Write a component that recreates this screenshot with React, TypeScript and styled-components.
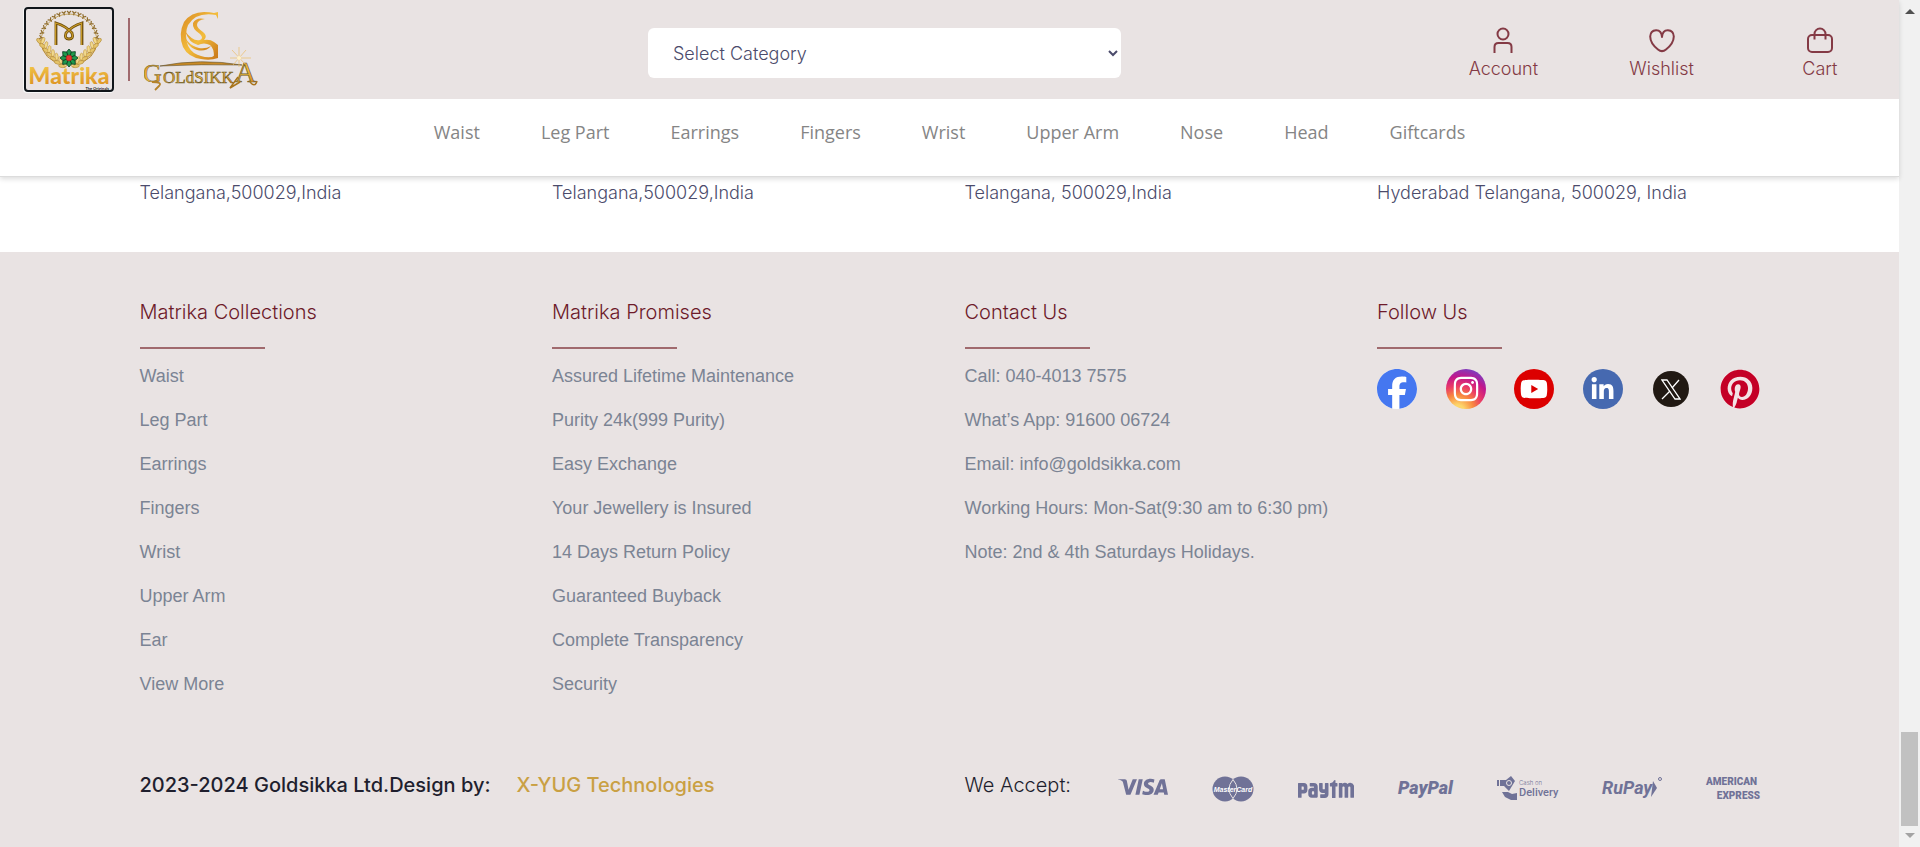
import React from "react";
import styled, { createGlobalStyle } from "styled-components";
import { FaFacebook, FaInstagram, FaLinkedinIn, FaPinterest, FaYoutube } from "react-icons/fa6";
import { SiPaytm, SiVisa } from "react-icons/si";

const inter = `Inter, "Liberation Sans", sans-serif`;
const arial = `"Liberation Sans", Arial, sans-serif`;

const GlobalStyle = createGlobalStyle`
  * { box-sizing: border-box; }
  body { margin: 0; background: #fff; font-family: ${inter}; color: #4b4b6b; }
  a { color: inherit; text-decoration: none; }
  h2, p, ul { margin: 0; padding: 0; }
  ul { list-style: none; }
`;

const Window = styled.div`
  display: flex;
  min-height: 100vh;
`;

const Page = styled.div`
  flex: 1;
  min-width: 0;
  display: flex;
  flex-direction: column;
`;

const Header = styled.header`
  position: sticky;
  top: 0;
  z-index: 2;
  background: #fff;
  border-bottom: 1px solid #dcdcdc;
  box-shadow: 0 2px 5px rgba(0, 0, 0, 0.14);
`;

const TopBar = styled.div`
  display: grid;
  grid-template-columns: 4fr 3fr 2fr 3fr;
  align-items: center;
  height: 99px;
  background: #e9e3e3;
`;

const Logos = styled.div`
  display: flex;
  align-items: center;
  gap: 14px;
  padding-left: 23px;

  a { display: block; height: 86px; }
  svg { display: block; }
`;

const LogoDivider = styled.span`
  width: 2px;
  height: 63px;
  background: #a06a6e;
`;

const CategorySelect = styled.select`
  justify-self: center;
  width: calc(100% - 2px);
  height: 50px;
  margin: 7px 0 0 28px;
  padding: 0 0 0 21px;
  border: 0;
  border-radius: 6px;
  background: #fff;
  color: #4b4b6b;
  font: 300 18px ${inter};
`;

const Actions = styled.nav`
  grid-column: 4;
  display: grid;
  grid-template-columns: repeat(3, 1fr);
`;

const Action = styled.a`
  display: flex;
  flex-direction: column;
  align-items: center;
  gap: 5px;
  padding-top: 7px;
  color: #843a45;
  font-size: 18px;
  font-weight: 300;
  line-height: 22px;
`;

const CategoryNav = styled.nav`
  display: flex;
  justify-content: center;
  gap: 61px;
  height: 77px;
  padding-top: 21px;
  color: #858585;
  font: 400 18px/24px "Open Sans", "Noto Sans", sans-serif;
`;

const Columns = styled.div`
  display: grid;
  grid-template-columns: repeat(4, 1fr);
  width: 100%;
  max-width: 1650px;
  margin: 0 auto;
`;

const Column = styled.section`
  padding: 0 15px;
`;

const Addresses = styled.section`
  padding: 4px 0 47px;
  font-size: 18px;
  font-weight: 300;
  line-height: 24px;
`;

const Footer = styled.footer`
  flex: 1;
  padding: 46px 0 48px;
  background: #e9e3e3;
`;

const Heading = styled.h2`
  color: #6d1a2a;
  font-size: 20px;
  font-weight: 300;
  line-height: 28px;

  &::after {
    content: "";
    display: block;
    width: 125px;
    height: 2px;
    margin-top: 21px;
    background: #a06a6e;
  }
`;

const LinkList = styled.ul`
  display: grid;
  gap: 20px;
  padding-top: 15px;
  color: #7b8494;
  font: 400 18px/24px ${arial};
`;

const Socials = styled.div`
  display: flex;
  justify-content: space-between;
  align-items: center;
  padding-top: 20px;
`;

const Social = styled.a<{ $bg: string; $fg?: string; $inset?: number }>`
  display: grid;
  place-items: center;
  width: ${(p) => 40 - 2 * (p.$inset ?? 0)}px;
  height: ${(p) => 40 - 2 * (p.$inset ?? 0)}px;
  margin: ${(p) => p.$inset ?? 0}px;
  border-radius: 50%;
  background: ${(p) => p.$bg};
  color: ${(p) => p.$fg ?? "#fff"};
`;

const Bottom = styled.div`
  display: grid;
  grid-template-columns: 1fr 1fr;
  width: 100%;
  max-width: 1650px;
  margin: 0 auto;
  padding-top: 75px;
  font-size: 20px;
  line-height: 28px;
  color: #1f1f2e;
`;

const Credit = styled.p`
  display: flex;
  gap: 26px;
  padding: 0 15px;
  font-weight: 500;

  a { color: #c9a043; }
`;

const Accept = styled.div`
  display: flex;
  justify-content: space-between;
  padding: 0 15px;
  font-weight: 300;
`;

const Payments = styled.div`
  display: flex;
  gap: 44px;
  padding-top: 4px;

  svg { display: block; height: 28px; fill: #707297; overflow: visible; }
`;

const ScrollTrack = styled.aside`
  position: sticky;
  top: 0;
  display: flex;
  flex-direction: column;
  justify-content: space-between;
  align-items: center;
  width: 21px;
  height: 100vh;
  padding: 9px 0;
  background: #f1f1f1;
`;

const ScrollThumb = styled.div`
  width: 17px;
  height: 94px;
  margin: auto 0 7px;
  background: #c1c1c1;
`;

const categories = ["Waist", "Leg Part", "Earrings", "Fingers", "Wrist", "Upper Arm", "Nose", "Head", "Giftcards"];

const addresses = [
  "Telangana,500029,India",
  "Telangana,500029,India",
  "Telangana, 500029,India",
  "Hyderabad Telangana, 500029, India",
];

const footerLists = [
  { title: "Matrika Collections", items: ["Waist", "Leg Part", "Earrings", "Fingers", "Wrist", "Upper Arm", "Ear", "View More"] },
  {
    title: "Matrika Promises",
    items: [
      "Assured Lifetime Maintenance",
      "Purity 24k(999 Purity)",
      "Easy Exchange",
      "Your Jewellery is Insured",
      "14 Days Return Policy",
      "Guaranteed Buyback",
      "Complete Transparency",
      "Security",
    ],
  },
  {
    title: "Contact Us",
    items: [
      "Call: 040-4013 7575",
      "What’s App: 91600 06724",
      "Email: info@goldsikka.com",
      "Working Hours: Mon-Sat(9:30 am to 6:30 pm)",
      "Note: 2nd & 4th Saturdays Holidays.",
    ],
  },
];

function MatrikaLogo() {
  const leaves = [0, 1, 2, 3, 4, 5, 6];
  const beads = Array.from({ length: 17 }, (_, i) => Math.PI * (1.04 + (i * 0.92) / 16));
  return (
    <svg width="91" height="86" viewBox="0 0 91 86" role="img" aria-label="Matrika The Originals">
      <defs>
        <linearGradient id="gold" x1="0" y1="0" x2="0" y2="1">
          <stop offset="0" stopColor="#f6cf52" />
          <stop offset="1" stopColor="#d98a1c" />
        </linearGradient>
      </defs>
      <rect x="0" y="0" width="91" height="86" rx="4" fill="#f7f7f7" />
      <rect x="2" y="1" width="88" height="83" rx="3" fill="#e9e3e3" stroke="#10151a" strokeWidth="2" />
      <path d="M18 35 A28 28 0 1 1 74 35" fill="none" stroke="#c3a45c" strokeWidth="1" />
      {beads.map((a, i) => (
        <g key={i} transform={`translate(${46 + 28 * Math.cos(a)} ${34 + 28 * Math.sin(a)}) rotate(${(a * 180) / Math.PI + 90})`}>
          <path d="M-2 -2 L0 0 L2 -2 M0 0 V2" stroke="#8f6c2c" strokeWidth="1.2" fill="none" />
        </g>
      ))}
      {[1, -1].map((side) => (
        <g key={side} transform={side === 1 ? undefined : "translate(92 0) scale(-1 1)"}>
          <path d="M18 34 Q19 53 41 58" fill="none" stroke="#b98a2d" strokeWidth="1" />
          {leaves.map((i) => (
            <g key={i} transform={`translate(${18 + i * 3 + i * i * 0.1} ${33 + i * 4.7 - i * i * 0.12}) rotate(${-12 - i * 7})`}>
              <ellipse cx="-2" cy="0" rx="1.8" ry="3.8" transform="rotate(-32)" fill="#e5c46b" stroke="#a57a25" strokeWidth=".5" />
              <ellipse cx="2" cy="0" rx="1.600" ry="3.600" transform="rotate(34)" fill="#f1d98d" stroke="#b98a2d" strokeWidth=".5" />
            </g>
          ))}
        </g>
      ))}
      <path
        d="M33 38 V16 Q43 19 49 26 Q51 32 46 32 Q41 32 43 26 Q49 19 59 16 V38"
        fill="none" stroke="#6e4e0c" strokeWidth="2.800"
      />
      <path
        d="M32.500 38 V16 Q43 19 49 26 Q51 32 46 32 Q41 32 43 26 Q49 19 58.500 16 V38"
        fill="none" stroke="#c89a28" strokeWidth="1.200"
      />
      {[0, 45, 90, 135, 180, 225, 270, 315].map((r) => (
        <path key={r} d="M46 51 L43.500 45 L46 42 L48.500 45 Z" transform={`rotate(${r} 46 51)`} fill="#1f9a4c" stroke="#0d3d22" strokeWidth=".8" />
      ))}
      <circle cx="46" cy="51" r="3" fill="#e8352e" stroke="#8c1c1c" strokeWidth=".6" />
      <text x="46" y="77" textAnchor="middle" fontFamily="Lato, sans-serif" fontSize="23" fontWeight="900" fill="url(#gold)">Matrika</text>
      <text x="86" y="83" textAnchor="end" fontFamily="Lato, sans-serif" fontSize="4" fontWeight="700" fill="#222">The Originals</text>
    </svg>
  );
}

function GoldsikkaLogo() {
  const font = { fontFamily: '"Liberation Serif", serif', fill: "url(#coin)", stroke: "#6a5a2a", strokeWidth: 0.5 };
  return (
    <svg width="116" height="86" viewBox="0 0 116 86" role="img" aria-label="Goldsikka">
      <defs>
        <linearGradient id="coin" x1="0" y1="0" x2="1" y2="1">
          <stop offset="0" stopColor="#d98a22" />
          <stop offset=".5" stopColor="#f3bd3c" />
          <stop offset="1" stopColor="#c97718" />
        </linearGradient>
      </defs>
      <g fill="url(#coin)">
        <path d="M74 5 V12 L72 8 Q60 6 52 10 Q42 16 42 28 Q42 40 50 46 Q58 51 68 50 L74 46 V51 Q66 54 57 52 Q44 50 39 40 Q34 27 40 15 Q47 5 60 5 Q66 5 70 6 Z" />
        <path d="M61 12 Q53 13 53 18 Q53 21 59 25 Q64 29 60 33 Q66 32 70 35 L74 38 V47 L70 50 Q70 41 66 38 Q60 35 54 38 Q45 36 41 24 Q49 35 56 33 Q60 31 56 27 Q48 22 49 16 Q52 10 61 12 Z" />
        <path d="M39 24 Q42 38 55 41 Q62 42 67 39 Q62 45 53 43 Q42 40 39 24 Z" />
      </g>
      <path d="M16 59 Q56 51 98 58 Q58 57 16 59 Z" fill="#c98a25" stroke="#5d4d2a" strokeWidth=".6" />
      <text x="-1" y="75" fontSize="26" {...font}>G</text>
      <path d="M8 75 Q19 75 15 79 L11 83" fill="none" stroke="#b5832a" strokeWidth="1.800" />
      <text x="19" y="76" fontSize="17" {...font} strokeWidth=".6">OLdSIKK</text>
      <text x="91" y="75" fontSize="29" {...font} strokeWidth=".7">A</text>
      <path d="M94 70 L86 81 L96 75 M106 75 Q111 81 113 74" fill="none" stroke="#a8741c" strokeWidth="1.500" />
      <g stroke="#edbd69" strokeWidth=".7">
        <path d="M95 40 V60 M86 51 H107 M88 43 L101 57 M102 43 L89 58" />
      </g>
      <circle cx="95" cy="51" r="2" fill="#fff2cc" />
    </svg>
  );
}

const line = { width: 26, height: 26, viewBox: "0 0 26 26", fill: "none", stroke: "currentColor", strokeWidth: 2, "aria-hidden": true };

const UserIcon = () => (
  <svg {...line}>
    <circle cx="13" cy="7" r="5.500" />
    <path d="M4.500 26 V20 Q4.500 16 8.500 16 H17.500 Q21.500 16 21.500 20 V26" />
  </svg>
);

const HeartIcon = () => (
  <svg {...line}>
    <path d="M13 10 Q12.500 3 7 3.200 Q1.500 3.500 1.200 9.500 Q1.300 16.500 9 22.500 Q13 25.800 17 22.500 Q24.700 16.500 24.800 9.500 Q24.500 3.500 19 3.200 Q13.500 3 13 10 Z" strokeLinejoin="round" />
  </svg>
);

const BagIcon = () => (
  <svg {...line}>
    <rect x="1" y="8" width="24" height="17" rx="4" />
    <path d="M7.500 12.500 V7 A5.500 5.500 0 0 1 18.500 7 V12.500" />
  </svg>
);

const XIcon = () => (
  <svg width="20" height="21" viewBox="0 0 20 21" fill="none" stroke="#fff" strokeWidth="1.300" aria-hidden>
    <path d="M1 1 H6 L19 20 H14 Z" />
    <path d="M18 1 L11 9 M9 12 L1 20" />
  </svg>
);

const MasterCard = () => (
  <svg width="42" viewBox="0 0 42 28" role="img" aria-label="MasterCard">
    <circle cx="13" cy="14" r="12.500" />
    <circle cx="29" cy="14" r="12.500" />
    <path d="M21 4.500 Q13 14 21 23.500 Q29 14 21 4.500 Z" fill="none" stroke="#e9e3e3" />
    <text x="21" y="16.500" textAnchor="middle" fontFamily="Liberation Sans, sans-serif" fontStyle="italic" fontWeight="700" fontSize="7" style={{ fill: "#fff" }}>MasterCard</text>
  </svg>
);

const PayPal = () => (
  <svg width="55" viewBox="0 0 55 28" role="img" aria-label="PayPal">
    <text x="0" y="19" fontFamily="Roboto, sans-serif" fontSize="18" fontWeight="900" fontStyle="italic">PayPal</text>
  </svg>
);

const CashOnDelivery = () => (
  <svg width="61" viewBox="0 0 61 28" role="img" aria-label="Cash on Delivery">
    <path d="M0 5 H2 V11 H0 Z M3 5 H9 L14 1 L18 6 L12 16 L7 11 H3 Z M5 17 H11 L15 19 L20 18 L20 25 H14 L8 22 Z" />
    <circle cx="12" cy="8" r="2.500" fill="none" stroke="#e9e3e3" />
    <text x="22" y="10" fontFamily="Inter, sans-serif" fontSize="6">Cash on</text>
    <text x="22" y="21" fontFamily="Roboto, sans-serif" fontSize="11" fontWeight="500">Delivery</text>
  </svg>
);

const RuPay = () => (
  <svg width="60" viewBox="0 0 60 28" role="img" aria-label="RuPay">
    <text x="0" y="19" fontFamily="Roboto, sans-serif" fontSize="18" fontWeight="700" fontStyle="italic">RuPay</text>
    <path d="M51 6 L55 13 L49 22 Z" />
    <circle cx="58" cy="4" r="1.500" style={{ fill: "none" }} stroke="#707297" />
  </svg>
);

const Amex = () => (
  <svg width="54" viewBox="0 0 54 28" role="img" aria-label="American Express">
    <g fontFamily="Roboto, sans-serif" fontSize="10" fontWeight="900">
      <text x="0" y="10">AMERICAN</text>
      <text x="54" y="24" textAnchor="end">EXPRESS</text>
    </g>
  </svg>
);

export default function App() {
  return (
    <Window>
      <GlobalStyle />
      <Page>
        <Header>
          <TopBar>
            <Logos>
              <a href="#matrika"><MatrikaLogo /></a>
              <LogoDivider />
              <a href="#goldsikka"><GoldsikkaLogo /></a>
            </Logos>
            <CategorySelect aria-label="Category" defaultValue="">
              <option value="">Select Category</option>
              {categories.map((c) => <option key={c}>{c}</option>)}
            </CategorySelect>
            <Actions>
              <Action href="#account"><UserIcon />Account</Action>
              <Action href="#wishlist"><HeartIcon />Wishlist</Action>
              <Action href="#cart"><BagIcon />Cart</Action>
            </Actions>
          </TopBar>
          <CategoryNav>
            {categories.map((c) => <a key={c} href="#category">{c}</a>)}
          </CategoryNav>
        </Header>

        <Addresses>
          <Columns>
            {addresses.map((a, i) => <Column key={i}>{a}</Column>)}
          </Columns>
        </Addresses>

        <Footer>
          <Columns>
            {footerLists.map(({ title, items }) => (
              <Column key={title}>
                <Heading>{title}</Heading>
                <LinkList>
                  {items.map((item) => <li key={item}><a href="#info">{item}</a></li>)}
                </LinkList>
              </Column>
            ))}
            <Column>
              <Heading>Follow Us</Heading>
              <Socials>
                <Social href="#facebook" aria-label="Facebook" $bg="#fff" $fg="#4577f0"><FaFacebook size={40} /></Social>
                <Social href="#instagram" aria-label="Instagram" $bg="radial-gradient(circle at 30% 105%, #fdd66b 0 12%, #f8873f 32%, #ea3a66 50%, #c2168c 68%, #5b50d8 95%)"><FaInstagram size={28} /></Social>
                <Social href="#youtube" aria-label="YouTube" $bg="#dc0000"><FaYoutube size={28} /></Social>
                <Social href="#linkedin" aria-label="LinkedIn" $bg="#4669b0"><FaLinkedinIn size={25} /></Social>
                <Social href="#x" aria-label="X" $bg="#211913" $inset={2}><XIcon /></Social>
                <Social href="#pinterest" aria-label="Pinterest" $bg="#f3e3e5" $fg="#c40026"><FaPinterest size={40} /></Social>
              </Socials>
            </Column>
          </Columns>

          <Bottom>
            <Credit>
              <span>2023-2024 Goldsikka Ltd.Design by:</span>
              <a href="#xyug">X-YUG Technologies</a>
            </Credit>
            <Accept>
              <span>We Accept:</span>
              <Payments>
                <SiVisa size={50} viewBox="0 9 24 8" title="Visa" />
                <MasterCard />
                <SiPaytm size={56} viewBox="0 8 24 8" title="Paytm" />
                <PayPal />
                <CashOnDelivery />
                <RuPay />
                <Amex />
              </Payments>
            </Accept>
          </Bottom>
        </Footer>
      </Page>

      <ScrollTrack aria-hidden>
        <svg width="10" height="5" viewBox="0 0 10 5"><path d="M0 5 L5 0 L10 5 Z" fill="#505050" /></svg>
        <ScrollThumb />
        <svg width="10" height="5" viewBox="0 0 10 5"><path d="M0 0 L5 5 L10 0 Z" fill="#a3a3a3" /></svg>
      </ScrollTrack>
    </Window>
  );
}
